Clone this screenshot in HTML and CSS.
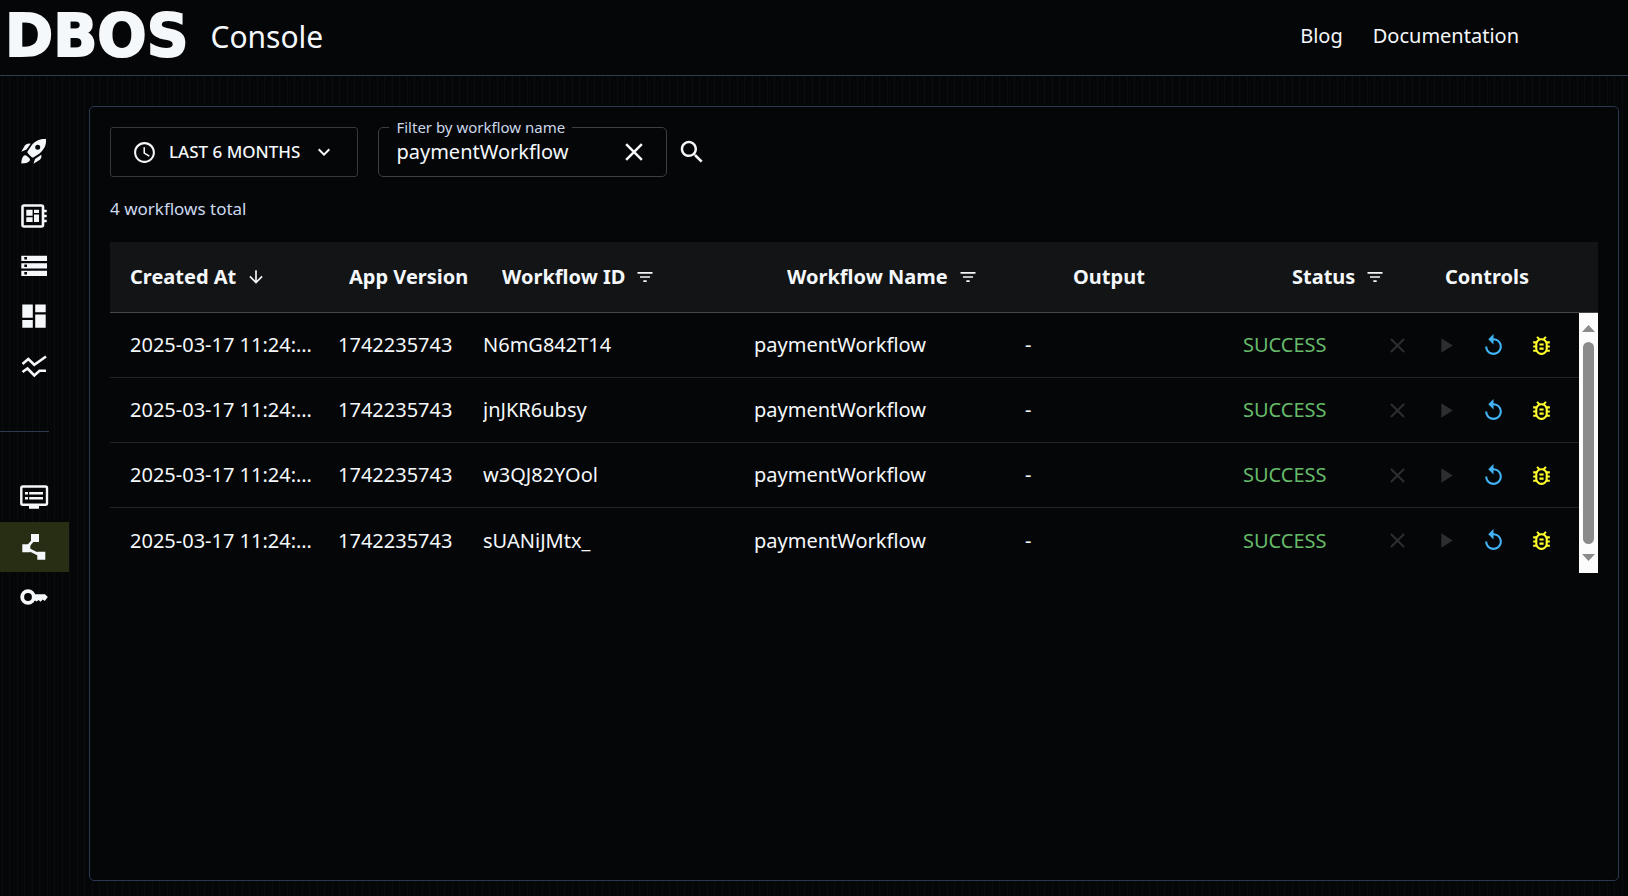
FILE: index.html
```html
<!DOCTYPE html>
<html lang="en">
<head>
<meta charset="utf-8">
<title>DBOS Console</title>
<link rel="stylesheet" href="styles.css">
</head>
<body>
<svg class="defs" aria-hidden="true">
  <symbol id="filter" viewBox="0 0 24 24"><path d="M10 18h4v-2h-4zM3 6v2h18V6zm3 7h12v-2H6z"/></symbol>
  <symbol id="close" viewBox="0 0 24 24"><path d="M19 6.41 17.59 5 12 10.59 6.41 5 5 6.41 10.59 12 5 17.59 6.41 19 12 13.41 17.59 19 19 17.59 13.41 12z"/></symbol>
  <symbol id="play" viewBox="0 0 24 24"><path d="M8 5v14l11-7z"/></symbol>
  <symbol id="replay" viewBox="0 0 24 24"><path d="M12 5V1L7 6l5 5V7c3.31 0 6 2.69 6 6s-2.69 6-6 6-6-2.69-6-6H4c0 4.42 3.58 8 8 8s8-3.58 8-8-3.58-8-8-8"/></symbol>
  <symbol id="bug" viewBox="0 0 24 24"><path d="M20 8h-2.81c-.45-.78-1.07-1.45-1.82-1.96L17 4.41 15.59 3l-2.17 2.17C12.96 5.06 12.49 5 12 5s-.96.06-1.41.17L8.41 3 7 4.41l1.62 1.63C7.88 6.55 7.26 7.22 6.81 8H4v2h2.09c-.05.33-.09.66-.09 1v1H4v2h2v1c0 .34.04.67.09 1H4v2h2.81c1.04 1.79 2.97 3 5.19 3s4.15-1.21 5.19-3H20v-2h-2.09c.05-.33.09-.66.09-1v-1h2v-2h-2v-1c0-.34-.04-.67-.09-1H20zm-4 4v3c0 .22-.03.47-.07.7l-.1.65-.37.65c-.72 1.24-2.04 2-3.46 2s-2.74-.77-3.46-2l-.37-.64-.1-.65C8.03 15.48 8 15.23 8 15v-4c0-.23.03-.48.07-.7l.1-.65.37-.65c.3-.52.72-.97 1.21-1.31l.57-.39.74-.18c.31-.08.63-.12.94-.12s.63.04.95.12l.68.16.61.42c.5.34.91.78 1.21 1.31l.38.65.1.65c.04.22.07.47.07.69zm-6 2h4v2h-4zm0-4h4v2h-4z"/></symbol>
</svg>

<header class="topbar">
  <a class="brand" href="#"><span class="logo">DBOS</span><span class="product">Console</span></a>
  <nav class="links"><a href="#">Blog</a><a href="#">Documentation</a></nav>
</header>

<div class="layout">
  <nav class="sidebar" aria-label="Sections">
    <a class="item launch" href="#" aria-label="Get started"><svg class="nav-icon" viewBox="0 0 32 32"><path fill-rule="evenodd" d="M28 4C21.500 3.500 17 6 13.500 10.500L9.500 16.500Q9 17.500 10 18.500L13.500 22Q14.500 23 15.700 22.200L21.500 18.500C26 14.500 28.500 10.500 28 4ZM19.700 9.800a2.500 2.500 0 1 1 0 5 2.500 2.500 0 0 1 0-5Z"/><path d="M3.300 16.700 7 10.300Q9 8 12.700 8.700L8.500 14.500ZM15.500 28.700 17 24 23.300 19.800Q24 23 21.500 25ZM3.300 28.500Q3.500 22.500 6 20.500Q8 19.300 10 22Q13 24 11.500 26Q9.500 28.500 3.300 28.500Z"/></svg></a>
    <a class="item" href="#" aria-label="Applications"><svg class="nav-icon" viewBox="0 0 32 32"><rect x="4.500" y="5.500" width="20.500" height="21" rx="1.500" fill="none" stroke="currentColor" stroke-width="2.600"/><path d="M25 9.700h3.700v2.600H25zM25 14.700h3.700v2.600H25zM25 19.700h3.700v2.600H25zM8.300 9.700h6.300v6H8.300zM8.300 17.300h6.300v4.700H8.300zM16 9.700h5v3.300h-5zM16 14.500h5v7.500h-5z"/></svg></a>
    <a class="item" href="#" aria-label="Database instances"><svg class="nav-icon" viewBox="0 0 32 32"><path fill-rule="evenodd" d="M3.300 5.700H29V11H3.300zM6.300 7v2.600h2.700V7zM3.300 13.200H29v5.300H3.300zM6.300 14.500v2.600h2.700v-2.600zM3.300 20.700H29V26H3.300zM6.300 22v2.600h2.700V22z"/></svg></a>
    <a class="item" href="#" aria-label="Dashboard"><svg class="nav-icon" viewBox="0 0 32 32"><path d="M4.300 4.500h10.500v13.200H4.300zM4.300 20h10.500v7.700H4.300zM17.200 4.500h10.500v7.700H17.200zM17.200 14.500h10.500v13.200H17.200z"/></svg></a>
    <a class="item" href="#" aria-label="Metrics"><svg class="nav-icon" viewBox="0 0 32 32" fill="none" stroke="currentColor" stroke-width="2.600"><path class="line" d="M4.500 14 10.300 9 16.300 14.800 28 6.500M4.500 22 9.500 18.500 16.300 25.500 21.500 20.700H28"/></svg></a>
    <hr class="divider">
    <a class="item" href="#" aria-label="Logs"><svg class="nav-icon" viewBox="0 0 32 32"><rect x="3.300" y="5.500" width="25.700" height="18.300" rx="1.500" fill="none" stroke="currentColor" stroke-width="2.400"/><path d="M11 24h10v3.700H11zM7 11h3v2.500H7zM11.200 11H25v2.500H11.200zM7 16h3v2.500H7zM11.200 16H25v2.500H11.200z"/></svg></a>
    <a class="item active" href="#" aria-label="Workflows" aria-current="page"><svg class="nav-icon" viewBox="0 0 32 32"><path class="line" d="M17 7 8.300 17.300 23.300 24.700" stroke="currentColor" stroke-width="2.700"/><path d="M13 3h8v8h-8zM4.300 13.300h8v8h-8zM19.300 20.700h8v8h-8z"/></svg></a>
    <a class="item" href="#" aria-label="Secrets"><svg class="nav-icon" viewBox="0 0 32 32"><circle cx="10" cy="16" r="5.800" fill="none" stroke="currentColor" stroke-width="3.800"/><path d="M16 13.300H27L29.800 16 26.800 20 24.800 18.500 22.600 20.700 20.600 19 18.800 20.500 16 19Z"/></svg></a>
  </nav>

  <main class="panel">
    <form class="toolbar">
      <button class="range" type="button">
        <svg class="icon" viewBox="0 0 24 24"><path d="M11.990 2C6.470 2 2 6.480 2 12s4.470 10 9.990 10C17.520 22 22 17.520 22 12S17.520 2 11.990 2M12 20c-4.420 0-8-3.580-8-8s3.580-8 8-8 8 3.580 8 8-3.580 8-8 8m.5-13H11v6l5.250 3.150.750-1.230-4.500-2.670z"/></svg>
        <span>LAST 6 MONTHS</span>
        <svg class="chevron" viewBox="0 0 24 24"><path d="M7.410 8.590 12 13.170l4.590-4.580L18 10l-6 6-6-6z"/></svg>
      </button>
      <fieldset class="filter">
        <legend><label for="name">Filter by workflow name</label></legend>
        <div class="field">
          <input id="name" type="text" value="paymentWorkflow">
          <button class="plain" type="button" aria-label="Clear"><svg class="clear"><use href="#close"/></svg></button>
        </div>
      </fieldset>
      <button class="plain search" type="submit" aria-label="Search"><svg class="clear" viewBox="0 0 24 24"><path d="M15.500 14h-.790l-.280-.270C15.410 12.590 16 11.110 16 9.500 16 5.910 13.090 3 9.500 3S3 5.910 3 9.500 5.910 16 9.500 16c1.610 0 3.090-.590 4.230-1.570l.270.280v.790l5 4.990L20.490 19zm-6 0C7.010 14 5 11.990 5 9.500S7.010 5 9.500 5 14 7.010 14 9.500 11.990 14 9.500 14"/></svg></button>
    </form>

    <p class="total">4 workflows total</p>

    <div class="table-wrap">
      <table>
        <thead>
          <tr>
            <th>Created At <svg class="sort" viewBox="0 0 24 24"><path d="m20 12-1.410-1.410L13 16.170V4h-2v12.170l-5.580-5.590L4 12l8 8z"/></svg></th>
            <th>App Version</th>
            <th>Workflow ID <svg class="sort"><use href="#filter"/></svg></th>
            <th>Workflow Name <svg class="sort"><use href="#filter"/></svg></th>
            <th>Output</th>
            <th>Status <svg class="sort"><use href="#filter"/></svg></th>
            <th>Controls</th>
          </tr>
        </thead>
        <tbody>
          <tr>
            <td>2025-03-17 11:24:00</td><td>1742235743</td><td>N6mG842T14</td><td>paymentWorkflow</td><td>-</td><td class="success">SUCCESS</td>
            <td class="controls"><button class="plain" disabled aria-label="Cancel"><svg class="icon"><use href="#close"/></svg></button><button class="plain" disabled aria-label="Resume"><svg class="icon"><use href="#play"/></svg></button><button class="plain restart" aria-label="Restart"><svg class="icon"><use href="#replay"/></svg></button><button class="plain debug" aria-label="Debug"><svg class="icon"><use href="#bug"/></svg></button></td>
          </tr>
          <tr>
            <td>2025-03-17 11:24:00</td><td>1742235743</td><td>jnJKR6ubsy</td><td>paymentWorkflow</td><td>-</td><td class="success">SUCCESS</td>
            <td class="controls"><button class="plain" disabled aria-label="Cancel"><svg class="icon"><use href="#close"/></svg></button><button class="plain" disabled aria-label="Resume"><svg class="icon"><use href="#play"/></svg></button><button class="plain restart" aria-label="Restart"><svg class="icon"><use href="#replay"/></svg></button><button class="plain debug" aria-label="Debug"><svg class="icon"><use href="#bug"/></svg></button></td>
          </tr>
          <tr>
            <td>2025-03-17 11:24:00</td><td>1742235743</td><td>w3QJ82YOol</td><td>paymentWorkflow</td><td>-</td><td class="success">SUCCESS</td>
            <td class="controls"><button class="plain" disabled aria-label="Cancel"><svg class="icon"><use href="#close"/></svg></button><button class="plain" disabled aria-label="Resume"><svg class="icon"><use href="#play"/></svg></button><button class="plain restart" aria-label="Restart"><svg class="icon"><use href="#replay"/></svg></button><button class="plain debug" aria-label="Debug"><svg class="icon"><use href="#bug"/></svg></button></td>
          </tr>
          <tr>
            <td>2025-03-17 11:24:00</td><td>1742235743</td><td>sUANiJMtx_</td><td>paymentWorkflow</td><td>-</td><td class="success">SUCCESS</td>
            <td class="controls"><button class="plain" disabled aria-label="Cancel"><svg class="icon"><use href="#close"/></svg></button><button class="plain" disabled aria-label="Resume"><svg class="icon"><use href="#play"/></svg></button><button class="plain restart" aria-label="Restart"><svg class="icon"><use href="#replay"/></svg></button><button class="plain debug" aria-label="Debug"><svg class="icon"><use href="#bug"/></svg></button></td>
          </tr>
        </tbody>
      </table>
      <div class="scrollbar" aria-hidden="true">
        <svg class="arrow" viewBox="0 0 13 7"><path d="M0 7 6.500 0 13 7z"/></svg>
        <span class="thumb"></span>
        <svg class="arrow" viewBox="0 0 13 7"><path d="M0 0h13L6.500 7z"/></svg>
      </div>
    </div>
  </main>
</div>
</body>
</html>
```
FILE: styles.css
```css
* { box-sizing: border-box; }

body {
  margin: 0;
  min-height: 100vh;
  display: flex;
  flex-direction: column;
  background: #040608 repeating-linear-gradient(90deg, transparent 0 2px, #0a0c0e 2px 3px, transparent 3px 9px, #0a0c0e 9px 10px, transparent 10px 15px);
  color: #f5f8fb;
  font: 20px/28px "Noto Sans", "Open Sans", sans-serif;
}

a { color: inherit; text-decoration: none; }
svg { display: block; flex: none; fill: currentColor; }
.line { fill: none; }
.defs { position: absolute; width: 0; height: 0; }

.topbar {
  display: flex;
  align-items: center;
  justify-content: space-between;
  height: 76px;
  padding: 0 109px 4px 5px;
  background: #040608;
  border-bottom: 1px solid #2e3a4f;
}
.brand { display: flex; align-items: center; gap: 22px; }
.logo {
  font: bold 58px/64px "DejaVu Sans", sans-serif;
  -webkit-text-stroke: 2px currentColor;
}
.product { font-size: 30px; line-height: 40px; padding-top: 2px; }
.links { display: flex; gap: 30px; }

.layout { flex: 1; display: flex; padding: 30px 9px 15px 0; }

.sidebar { flex: none; width: 89px; padding-top: 20px; }
.item {
  display: flex;
  align-items: center;
  width: 69px;
  height: 50px;
  padding-left: 18px;
}
.launch { margin-bottom: 15px; }
.active { background: #272e14; }
.nav-icon { width: 32px; height: 32px; }
.divider {
  width: 49px;
  margin: 40px 0;
  border: 0;
  border-top: 1px solid #2e3a4f;
}

.panel {
  flex: 1;
  min-width: 0;
  padding: 10px 20px 20px;
  background: #040608;
  border: 1px solid #2b3852;
  border-radius: 5px;
}

.toolbar { display: flex; align-items: flex-end; gap: 20px; }
button, input { font: inherit; color: inherit; }
.range {
  display: flex;
  align-items: center;
  gap: 12px;
  height: 50px;
  padding: 0 21px;
  background: none;
  border: 1px solid #35383f;
  border-radius: 3px;
  font-size: 17px;
  font-weight: 500;
}
.icon { width: 25px; height: 25px; }
.chevron { width: 24px; height: 24px; }

.filter {
  width: 289px;
  min-width: 0;
  height: 60px;
  margin: 0;
  padding: 0 17px 0 10px;
  border: 1px solid #3d3f42;
  border-radius: 5px;
}
.filter legend { padding: 0 7px; font-size: 15px; line-height: 20px; color: #cdd7ea; }
.field { display: flex; align-items: center; height: 30px; padding-left: 7px; }
.field input {
  flex: 1;
  min-width: 0;
  padding: 0;
  background: none;
  border: 0;
  outline: 0;
}
.clear { width: 30px; height: 30px; }
.plain { display: block; padding: 0; background: none; border: 0; }
.search { margin: 0 0 10px -10px; }

.total { margin: 18px 0 19px; font-size: 17px; color: #cdd9ef; }

.table-wrap { position: relative; }
table, thead, tbody { display: block; }
tr { display: grid; align-items: center; }
th, td { padding: 0; overflow: hidden; text-overflow: ellipsis; white-space: nowrap; }
thead tr {
  grid-template-columns: 219fr 153fr 285fr 286fr 219fr 153fr 153fr;
  height: 71px;
  padding-left: 20px;
  background: #121415;
  border-bottom: 1px solid #454749;
}
th { display: flex; align-items: center; gap: 10px; text-align: left; font-weight: 700; }
.sort { width: 20px; height: 20px; }
tbody { margin-right: 19px; }
tbody tr {
  grid-template-columns: 208fr 145fr 271fr 271fr 218fr 142fr 194fr;
  height: 65px;
  padding-left: 20px;
  border-bottom: 1px solid #222426;
}
tbody tr:last-child { border-bottom: 0; }
td { padding-right: 24px; }
.success { color: #66bb6a; }
.controls { display: flex; gap: 23px; padding: 0; }
.plain:disabled { color: #2c2e30; }
.restart { color: #42b4f5; }
.debug { color: #ffff2c; }

.scrollbar {
  position: absolute;
  top: 71px;
  right: 0;
  bottom: 0;
  display: flex;
  flex-direction: column;
  align-items: center;
  justify-content: space-between;
  gap: 10px;
  width: 19px;
  padding: 12px 0;
  background: #fcfcfc;
  color: #8b8b8b;
}
.arrow { width: 13px; height: 7px; }
.thumb { flex: 1; width: 11px; background: #8b8b8b; border-radius: 6px; }
```
